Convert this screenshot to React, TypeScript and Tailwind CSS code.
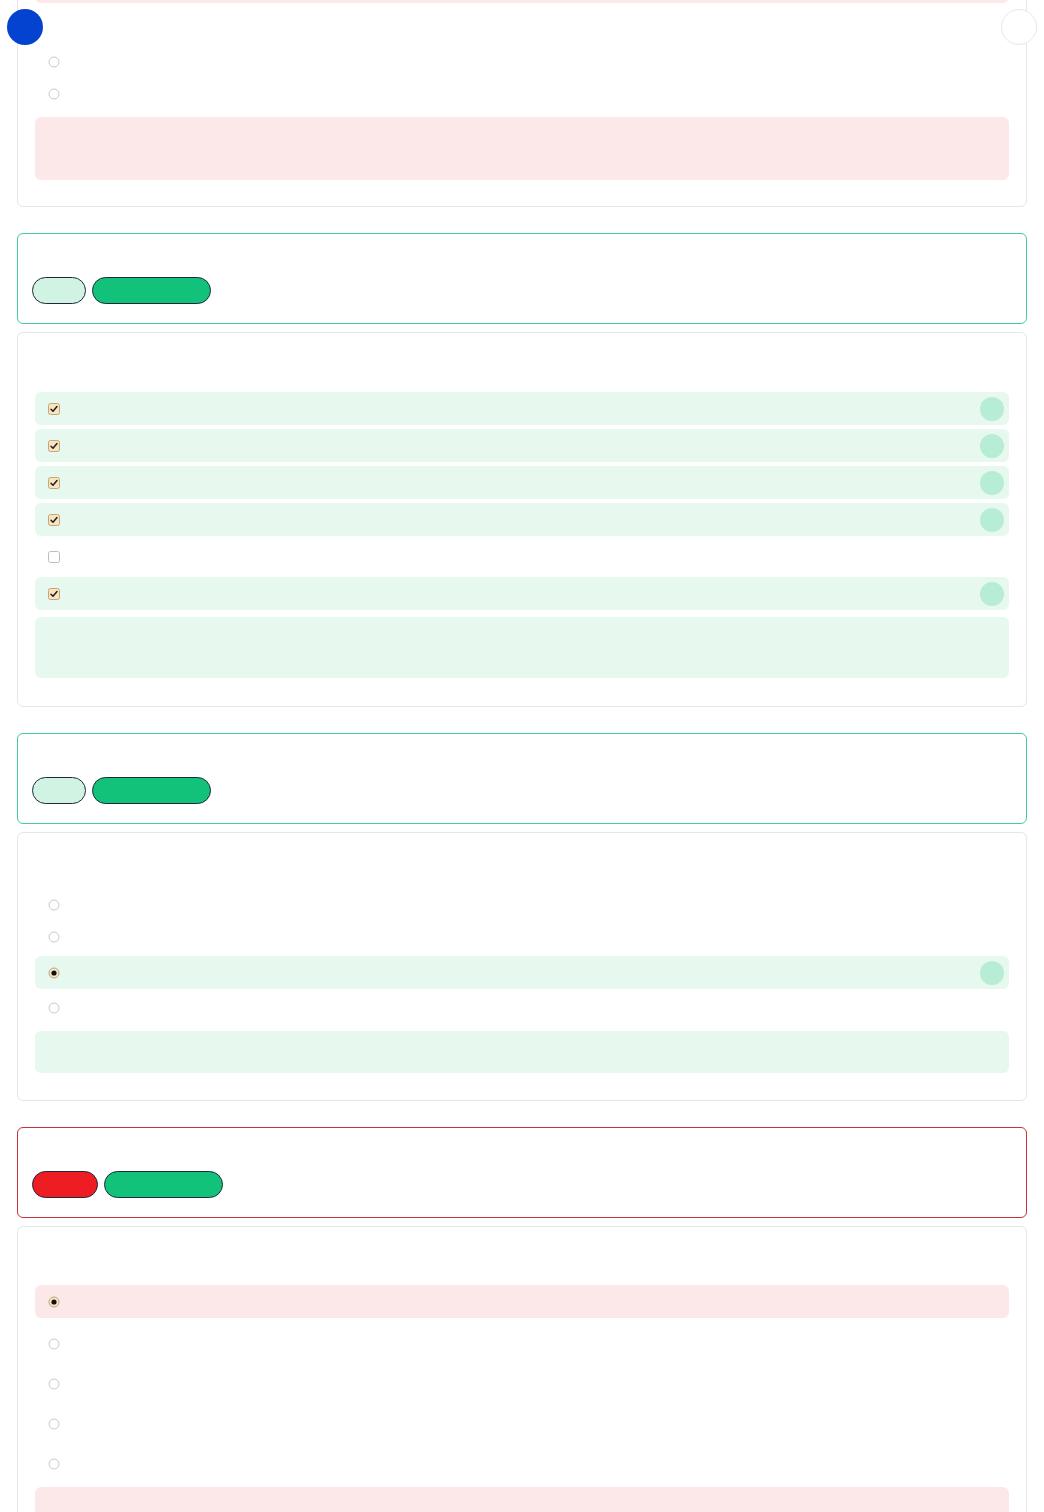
import React from "react";

function Checkbox({ checked }: { checked: boolean }) {
  return (
    <svg width="12" height="12" viewBox="0 0 12 12" className="shrink-0">
      <rect x="0.5" y="0.5" width="11" height="11" rx="2" fill={checked ? "#f9e4c2" : "#ffffff"} stroke={checked ? "#c6a679" : "#bdbdbd"} />
      {checked && <path d="M3 6.2 L5 8.2 L9 3.6" fill="none" stroke="#1f1f1f" strokeWidth="1.5" strokeLinecap="round" strokeLinejoin="round" />}
    </svg>
  );
}

function Radio({ checked }: { checked: boolean }) {
  return (
    <svg width="12" height="12" viewBox="0 0 12 12" className="shrink-0">
      <circle cx="6" cy="6" r="5" fill={checked ? "#f6e8cb" : "#ffffff"} stroke={checked ? "#bda57c" : "#c9c9c9"} />
      {checked && <circle cx="6" cy="6" r="2.6" fill="#111111" />}
    </svg>
  );
}

type Row = { kind: "check" | "radio"; on: boolean; tone?: "mint" | "pink"; h?: string; mark?: boolean };

function OptionRow({ row }: { row: Row }) {
  const bg = row.tone === "mint" ? "bg-[#e7f8ef]" : row.tone === "pink" ? "bg-[#fde8e9]" : "";
  return (
    <div className={`flex items-center justify-between rounded-md pl-[13px] pr-[5px] ${row.h ?? "h-[33px]"} ${bg}`}>
      {row.kind === "check" ? <Checkbox checked={row.on} /> : <Radio checked={row.on} />}
      {row.mark && <span className="h-6 w-6 rounded-full bg-[#b7ecd5]" />}
    </div>
  );
}

function Header({ tone, firstPill }: { tone: "teal" | "red"; firstPill: string }) {
  const border = tone === "teal" ? "border-[#45c9a9]" : "border-[#c8313a]";
  return (
    <div className={`rounded-md border bg-white px-[14px] pt-[14px] pb-[19px] ${border}`}>
      <div className="h-[29px]" />
      <div className="flex gap-[6px]">
        <span className={`h-[27px] rounded-full border border-[#1f2937] ${firstPill}`} />
        <span className="h-[27px] w-[119px] rounded-full border border-[#1f2937] bg-[#12c27a]" />
      </div>
    </div>
  );
}

export default function App() {
  const checks: Row[] = [
    { kind: "check", on: true, tone: "mint", mark: true },
    { kind: "check", on: true, tone: "mint", mark: true },
    { kind: "check", on: true, tone: "mint", mark: true },
    { kind: "check", on: true, tone: "mint", mark: true },
    { kind: "check", on: false },
    { kind: "check", on: true, tone: "mint", mark: true },
  ];

  return (
    <div className="relative min-h-screen overflow-hidden bg-white">
      <button className="fixed left-[7px] top-[9px] z-10 h-9 w-9 rounded-full bg-[#0443cf]" />
      <button className="fixed right-[7px] top-[9px] z-10 h-9 w-9 rounded-full border border-[#e5e7eb] bg-white" />

      <div className="flex flex-col px-[17px]">
        {/* previous question, scrolled partly off screen */}
        <div className="mt-[-48px] rounded-md border border-[#e6e6e6] bg-white px-[17px] pt-[17px] pb-[26px]">
          <div className="h-[33px] rounded-md bg-[#fde8e9]" />
          <div className="mt-[43px] flex flex-col">
            <OptionRow row={{ kind: "radio", on: false, h: "h-[32px]" }} />
            <OptionRow row={{ kind: "radio", on: false, h: "h-[32px]" }} />
          </div>
          <div className="mt-[7px] h-[63px] rounded-md bg-[#fde8e9]" />
        </div>

        <div className="mt-[26px]">
          <Header tone="teal" firstPill="w-[54px] bg-[#d0f3e4]" />
          <div className="mt-[8px] rounded-md border border-[#e6e6e6] bg-white px-[17px] pt-[59px] pb-[28px]">
            <div className="flex flex-col gap-1">
              {checks.map((r, i) => (
                <OptionRow key={i} row={r} />
              ))}
            </div>
            <div className="mt-[7px] h-[61px] rounded-md bg-[#e7f8ef]" />
          </div>
        </div>

        <div className="mt-[26px]">
          <Header tone="teal" firstPill="w-[54px] bg-[#d0f3e4]" />
          <div className="mt-[8px] rounded-md border border-[#e6e6e6] bg-white px-[17px] pt-[56px] pb-[27px]">
            <div className="flex flex-col">
              <OptionRow row={{ kind: "radio", on: false, h: "h-[32px]" }} />
              <OptionRow row={{ kind: "radio", on: false, h: "h-[32px]" }} />
              <div className="mt-[3px]">
                <OptionRow row={{ kind: "radio", on: true, tone: "mint", mark: true }} />
              </div>
              <div className="mt-[2px]">
                <OptionRow row={{ kind: "radio", on: false, h: "h-[33px]" }} />
              </div>
            </div>
            <div className="mt-[7px] h-[42px] rounded-md bg-[#e7f8ef]" />
          </div>
        </div>

        <div className="mt-[26px]">
          <Header tone="red" firstPill="w-[66px] bg-[#ee1d23]" />
          <div className="mt-[8px] rounded-md border border-[#e6e6e6] bg-white px-[17px] pt-[58px] pb-[27px]">
            <div className="flex flex-col">
              <OptionRow row={{ kind: "radio", on: true, tone: "pink" }} />
              <div className="mt-[6px] flex flex-col">
                <OptionRow row={{ kind: "radio", on: false, h: "h-[40px]" }} />
                <OptionRow row={{ kind: "radio", on: false, h: "h-[40px]" }} />
                <OptionRow row={{ kind: "radio", on: false, h: "h-[40px]" }} />
                <OptionRow row={{ kind: "radio", on: false, h: "h-[40px]" }} />
              </div>
            </div>
            <div className="mt-[3px] h-[63px] rounded-md bg-[#fde8e9]" />
          </div>
        </div>
      </div>
    </div>
  );
}
